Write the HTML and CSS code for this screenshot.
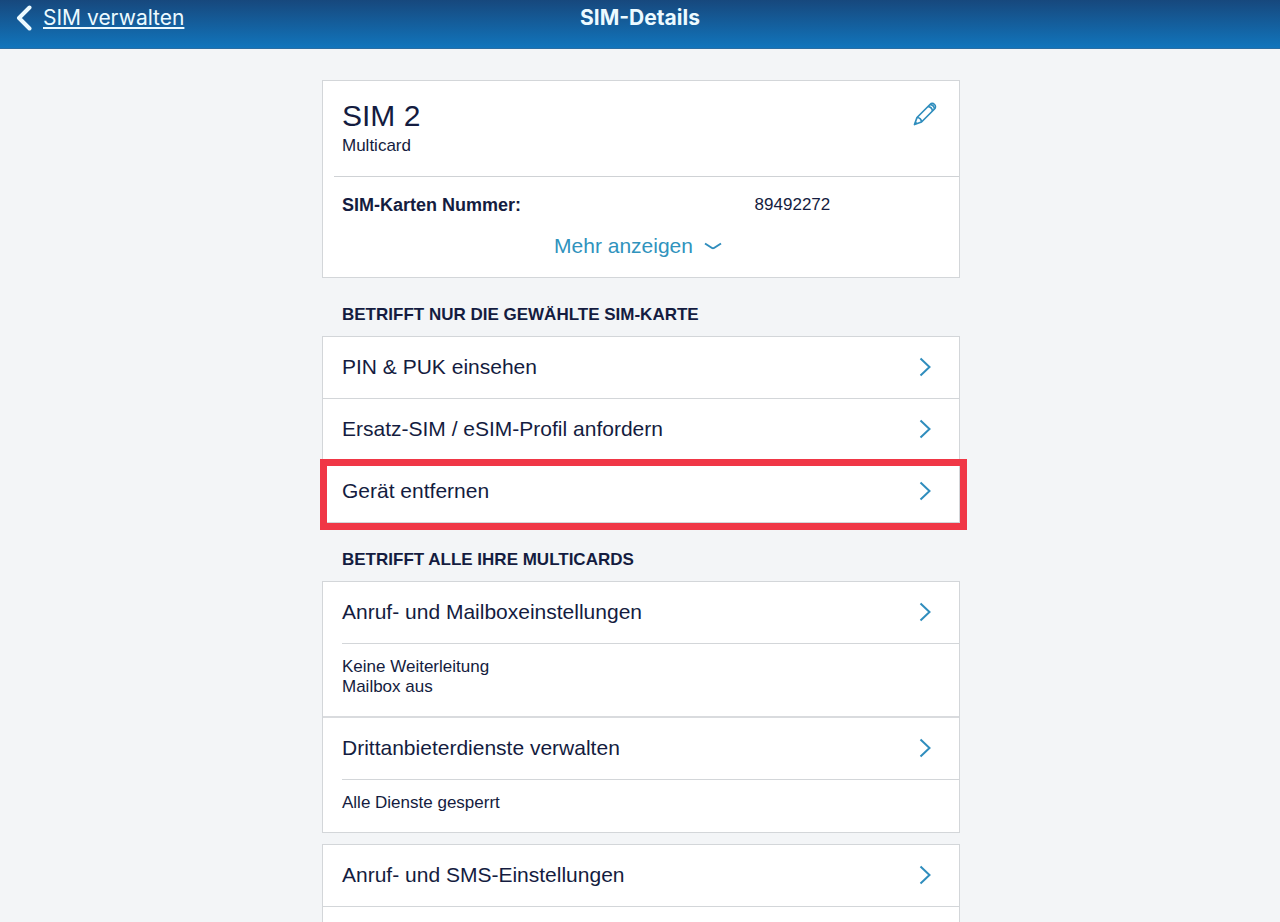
FILE: index.html
```html
<!DOCTYPE html>
<html lang="de">
<head>
    <meta charset="UTF-8">
    <meta name="viewport" content="width=device-width, initial-scale=1.0">
    <title>SIM-Details</title>
    <link rel="stylesheet" href="styles.css">
</head>
<body>
    <header class="topbar">
        <a class="back" href="#">
            <svg class="back-icon" width="16" height="26" viewBox="0 0 16 26" aria-hidden="true"><path d="M13.500 2.500L3 13L13.500 23.500"/></svg>
            <span>SIM verwalten</span>
        </a>
        <h1 class="topbar-title">SIM-Details</h1>
    </header>

    <main class="content">
        <!-- Selected SIM card -->
        <section class="card sim">
            <div class="sim-head">
                <div>
                    <h2 class="sim-name">SIM 2</h2>
                    <p class="sim-type">Multicard</p>
                </div>
                <button class="edit" type="button" aria-label="Bearbeiten">
                    <svg width="24" height="24" viewBox="0 0 24 24" aria-hidden="true">
                        <path d="M1.500 22.500L4 15.500L17 2.500C18.200 1.300 20.200 1.200 21.500 2.500C22.800 3.800 22.700 5.800 21.500 7L8.500 20Z"/>
                        <path d="M4 15.500C6.500 15.700 8.300 17.500 8.500 20M15 4.500C17.500 4.800 19.200 6.500 19.500 9M17 2.500C19.500 2.800 21.200 4.500 21.500 7M2.300 20.300L3.700 21.700"/>
                    </svg>
                </button>
            </div>
            <div class="sim-body">
                <dl class="sim-data">
                    <dt>SIM-Karten Nummer:</dt>
                    <dd>89492272</dd>
                </dl>
                <button class="more" type="button">
                    Mehr anzeigen
                    <svg width="18" height="8" viewBox="0 0 18 8" aria-hidden="true"><path d="M1 1.500L8 6Q9 6.600 10 6L17 1.500"/></svg>
                </button>
            </div>
        </section>

        <h2 class="group-title">BETRIFFT NUR DIE GEWÄHLTE SIM-KARTE</h2>
        <nav class="card list">
            <a class="row" href="#">
                PIN &amp; PUK einsehen
                <svg class="chevron" width="12" height="20" viewBox="0 0 12 20" aria-hidden="true"><path d="M1.500 1.500L10.500 10L1.500 18.500"/></svg>
            </a>
            <a class="row" href="#">
                Ersatz-SIM / eSIM-Profil anfordern
                <svg class="chevron" width="12" height="20" viewBox="0 0 12 20" aria-hidden="true"><path d="M1.500 1.500L10.500 10L1.500 18.500"/></svg>
            </a>
            <a class="row marked" href="#">
                Gerät entfernen
                <svg class="chevron" width="12" height="20" viewBox="0 0 12 20" aria-hidden="true"><path d="M1.500 1.500L10.500 10L1.500 18.500"/></svg>
            </a>
        </nav>

        <h2 class="group-title">BETRIFFT ALLE IHRE MULTICARDS</h2>
        <section class="card list">
            <a class="row" href="#">
                Anruf- und Mailboxeinstellungen
                <svg class="chevron" width="12" height="20" viewBox="0 0 12 20" aria-hidden="true"><path d="M1.500 1.500L10.500 10L1.500 18.500"/></svg>
            </a>
            <p class="detail">Keine Weiterleitung<br>Mailbox aus</p>
            <a class="row" href="#">
                Drittanbieterdienste verwalten
                <svg class="chevron" width="12" height="20" viewBox="0 0 12 20" aria-hidden="true"><path d="M1.500 1.500L10.500 10L1.500 18.500"/></svg>
            </a>
            <p class="detail">Alle Dienste gesperrt</p>
        </section>

        <!-- Open ended card at the bottom of the page -->
        <section class="card list last">
            <a class="row" href="#">
                Anruf- und SMS-Einstellungen
                <svg class="chevron" width="12" height="20" viewBox="0 0 12 20" aria-hidden="true"><path d="M1.500 1.500L10.500 10L1.500 18.500"/></svg>
            </a>
        </section>
    </main>
</body>
</html>
```
FILE: styles.css
```css
* {
    box-sizing: border-box;
}
body {
    display: flex;
    flex-direction: column;
    min-height: 100vh;
    margin: 0;
    background-color: #f3f5f7;
    color: #141c40;
    font-family: 'Liberation Sans', Arial, sans-serif;
    font-size: 17px;
    line-height: 20px;
}
h1, h2, p, dl, dd {
    margin: 0;
    font-weight: normal;
}
a {
    color: inherit;
    text-decoration: none;
}
button {
    padding: 0;
    border: none;
    background: none;
    color: #3093bd;
    font: inherit;
    cursor: pointer;
}
svg {
    display: block;
    flex: none;
    fill: none;
    stroke: #2f8dbd;
    stroke-width: 2;
}
/* Top bar */
.topbar {
    display: grid;
    grid-template-columns: 1fr auto 1fr;
    align-items: start;
    height: 49px;
    padding: 5px 16px 0;
    border-bottom: 1px solid #2a6da3;
    background: linear-gradient(#17487d, #1175bc);
    color: #ecfaff;
    font-family: Inter, 'Liberation Sans', sans-serif;
    font-size: 21px;
    line-height: 26px;
}
.back {
    display: flex;
    gap: 11px;
}
.back span {
    text-decoration: underline;
    text-decoration-thickness: 2px;
    text-underline-offset: 2px;
}
.back-icon {
    stroke: #ecfaff;
    stroke-width: 4;
    stroke-linecap: round;
    stroke-linejoin: round;
}
.topbar-title {
    font-size: 21px;
    font-weight: bold;
}
/* Page column */
.content {
    display: flex;
    flex: 1;
    flex-direction: column;
    width: 100%;
    max-width: 640px;
    margin: 0 auto;
    padding: 31px 0 0 2px;
}
.card {
    border: 1px solid #d3d6d9;
    background-color: #fff;
}
/* SIM card */
.sim-head {
    display: flex;
    justify-content: space-between;
    margin-left: 11px;
    padding: 16px 22px 19px 8px;
    border-bottom: 1px solid #cfd2d5;
}
.sim-name {
    font-size: 30px;
    line-height: 38px;
}
.sim-type {
    line-height: 22px;
}
.edit {
    align-self: flex-start;
    margin-top: 5px;
}
.edit svg {
    stroke-width: 1.7;
    stroke-linejoin: round;
}
.sim-body {
    padding: 18px 19px;
}
.sim-data {
    display: grid;
    grid-template-columns: 69% 1fr;
}
.sim-data dt {
    font-size: 18px;
    font-weight: bold;
}
.more {
    display: flex;
    align-items: center;
    gap: 11px;
    margin: 18px auto 0;
    padding-right: 6px;
    font-size: 21px;
    line-height: 26px;
}
/* Lists */
.group-title {
    padding: 27px 20px 11px;
    font-size: 17px;
    font-weight: bold;
    line-height: 20px;
}
.row {
    display: flex;
    position: relative;
    align-items: center;
    justify-content: space-between;
    padding: 17px 28px 18px 19px;
    font-size: 21px;
    line-height: 26px;
}
.row + .row {
    border-top: 1px solid #d3d6d9;
}
.detail + .row {
    border-top: 2px solid #d9dbde;
}
.detail {
    margin-left: 19px;
    padding: 13px 19px 19px 0;
    border-top: 1px solid #d3d6d9;
}
/* Red frame drawn over the edges of the card */
.marked::after {
    content: '';
    position: absolute;
    inset: -2px -8px -8px -3px;
    border: 7px solid #f03746;
}
.last {
    flex: 1;
    margin-top: 11px;
    border-bottom: none;
}
.last .row {
    border-bottom: 1px solid #d3d6d9;
}
```
